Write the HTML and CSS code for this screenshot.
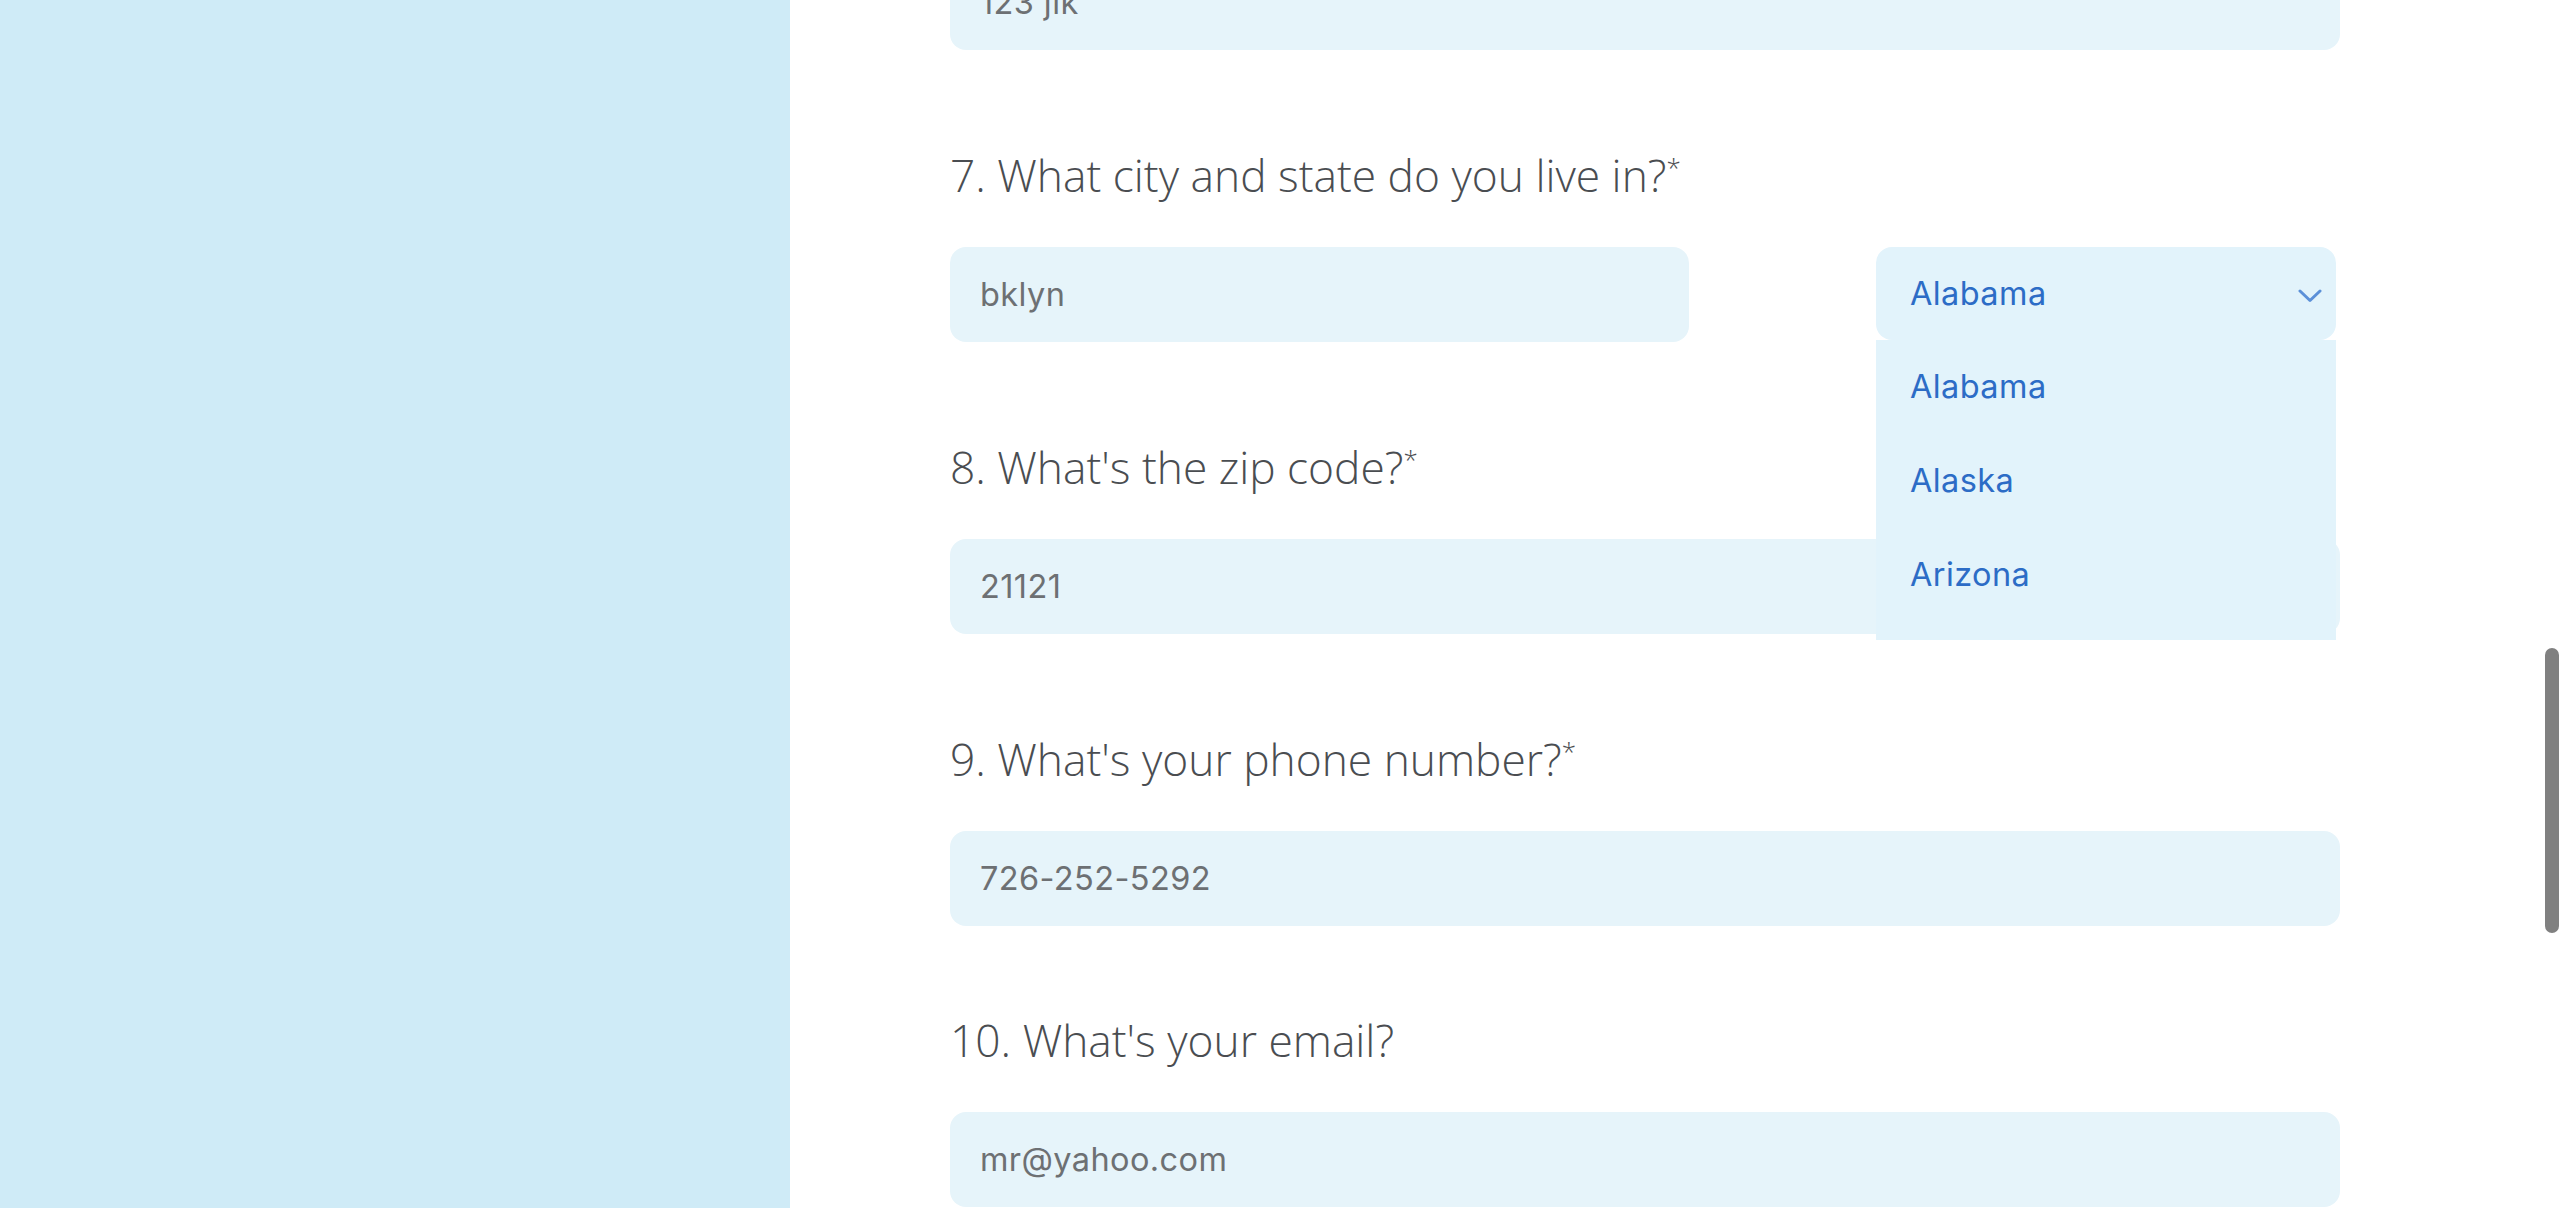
FILE: index.html
```html
<!DOCTYPE html>
<html lang="en">
<head>
<meta charset="utf-8">
<title>Form</title>
<link rel="stylesheet" href="styles.css">
</head>
<body>
<div class="page">
  <aside class="sidebar"></aside>
  <main class="main">
    <form class="form">
      <div class="field field-cut">
        <input class="input" type="text" value="123 jlk" readonly>
      </div>

      <div class="question">
        <label class="q-label">7. What city and state do you live in?<sup>*</sup></label>
        <div class="row">
          <input class="input city" type="text" value="bklyn" readonly>
          <div class="select-wrap">
            <div class="select">
              <span>Alabama</span>
              <svg class="chevron" width="24" height="14" viewBox="0 0 24 14" aria-hidden="true">
                <path d="M2 2 L12 11.5 L22 2" fill="none" stroke="#5b90d8" stroke-width="3" stroke-linecap="round" stroke-linejoin="round"/>
              </svg>
            </div>
            <ul class="dropdown">
              <li>Alabama</li>
              <li>Alaska</li>
              <li>Arizona</li>
            </ul>
          </div>
        </div>
      </div>

      <div class="question">
        <label class="q-label">8. What's the zip code?<sup>*</sup></label>
        <input class="input" type="text" value="21121" readonly>
      </div>

      <div class="question">
        <label class="q-label">9. What's your phone number?<sup>*</sup></label>
        <input class="input" type="text" value="726-252-5292" readonly>
      </div>

      <div class="question">
        <label class="q-label">10. What's your email?</label>
        <input class="input" type="text" value="mr@yahoo.com" readonly>
      </div>
    </form>
  </main>
  <div class="scrollbar"></div>
</div>
</body>
</html>
```

FILE: styles.css
```css
html, body {
  margin: 0;
  padding: 0;
  height: 100%;
  overflow: hidden;
  background: #ffffff;
}

.page {
  display: flex;
  height: 100vh;
}

.sidebar {
  flex: none;
  width: 790px;
  background: #cfebf7;
}

.main {
  flex: 1;
  padding-left: 160px;
  overflow: hidden;
}

.form {
  width: 1390px;
}

.field-cut {
  margin-top: -46px;
}

.input {
  display: block;
  box-sizing: border-box;
  width: 100%;
  height: 95.5px;
  margin: 0;
  padding: 0 30px;
  border: 0;
  border-radius: 16px;
  background: #e6f4fa;
  font-family: "Inter", "Liberation Sans", sans-serif;
  font-size: 32.5px;
  font-weight: 400;
  letter-spacing: 0.4px;
  color: #6d7073;
  outline: none;
}

.field-cut .input {
  height: 96px;
}

.question {
  margin-top: 83.5px;
}

.q-label {
  display: block;
  margin-bottom: 42px;
  font-family: "Open Sans", "Liberation Sans", sans-serif;
  font-weight: 300;
  font-size: 44.3px;
  line-height: 60px;
  color: #4a4d51;
}

.q-label sup {
  font-size: 26px;
  line-height: 67px;
  vertical-align: 15px;
}

.row {
  display: flex;
  justify-content: space-between;
  align-items: flex-start;
  width: 1386px;
}

.city {
  width: 739px;
}

.select-wrap {
  position: relative;
  width: 460px;
}

.select {
  display: flex;
  align-items: center;
  justify-content: space-between;
  box-sizing: border-box;
  height: 93px;
  padding: 0 14px 0 34px;
  border-radius: 16px;
  background: #e2f3fb;
  font-family: "Inter", "Liberation Sans", sans-serif;
  font-size: 32.5px;
  letter-spacing: 0.4px;
  color: #2c6cc6;
}

.chevron {
  display: block;
  margin-top: 5px;
}

.dropdown {
  position: absolute;
  top: 100%;
  left: 0;
  z-index: 2;
  box-sizing: border-box;
  width: 100%;
  height: 300px;
  margin: 0;
  padding: 0;
  list-style: none;
  overflow: hidden;
  background: #e2f3fb;
}

.dropdown li {
  display: flex;
  align-items: center;
  box-sizing: border-box;
  height: 94px;
  padding-left: 34px;
  font-family: "Inter", "Liberation Sans", sans-serif;
  font-size: 32.5px;
  letter-spacing: 0.4px;
  color: #2c6cc6;
}

.scrollbar {
  position: fixed;
  top: 648px;
  right: 1px;
  width: 14px;
  height: 285px;
  border-radius: 7px;
  background: #808080;
}
```
